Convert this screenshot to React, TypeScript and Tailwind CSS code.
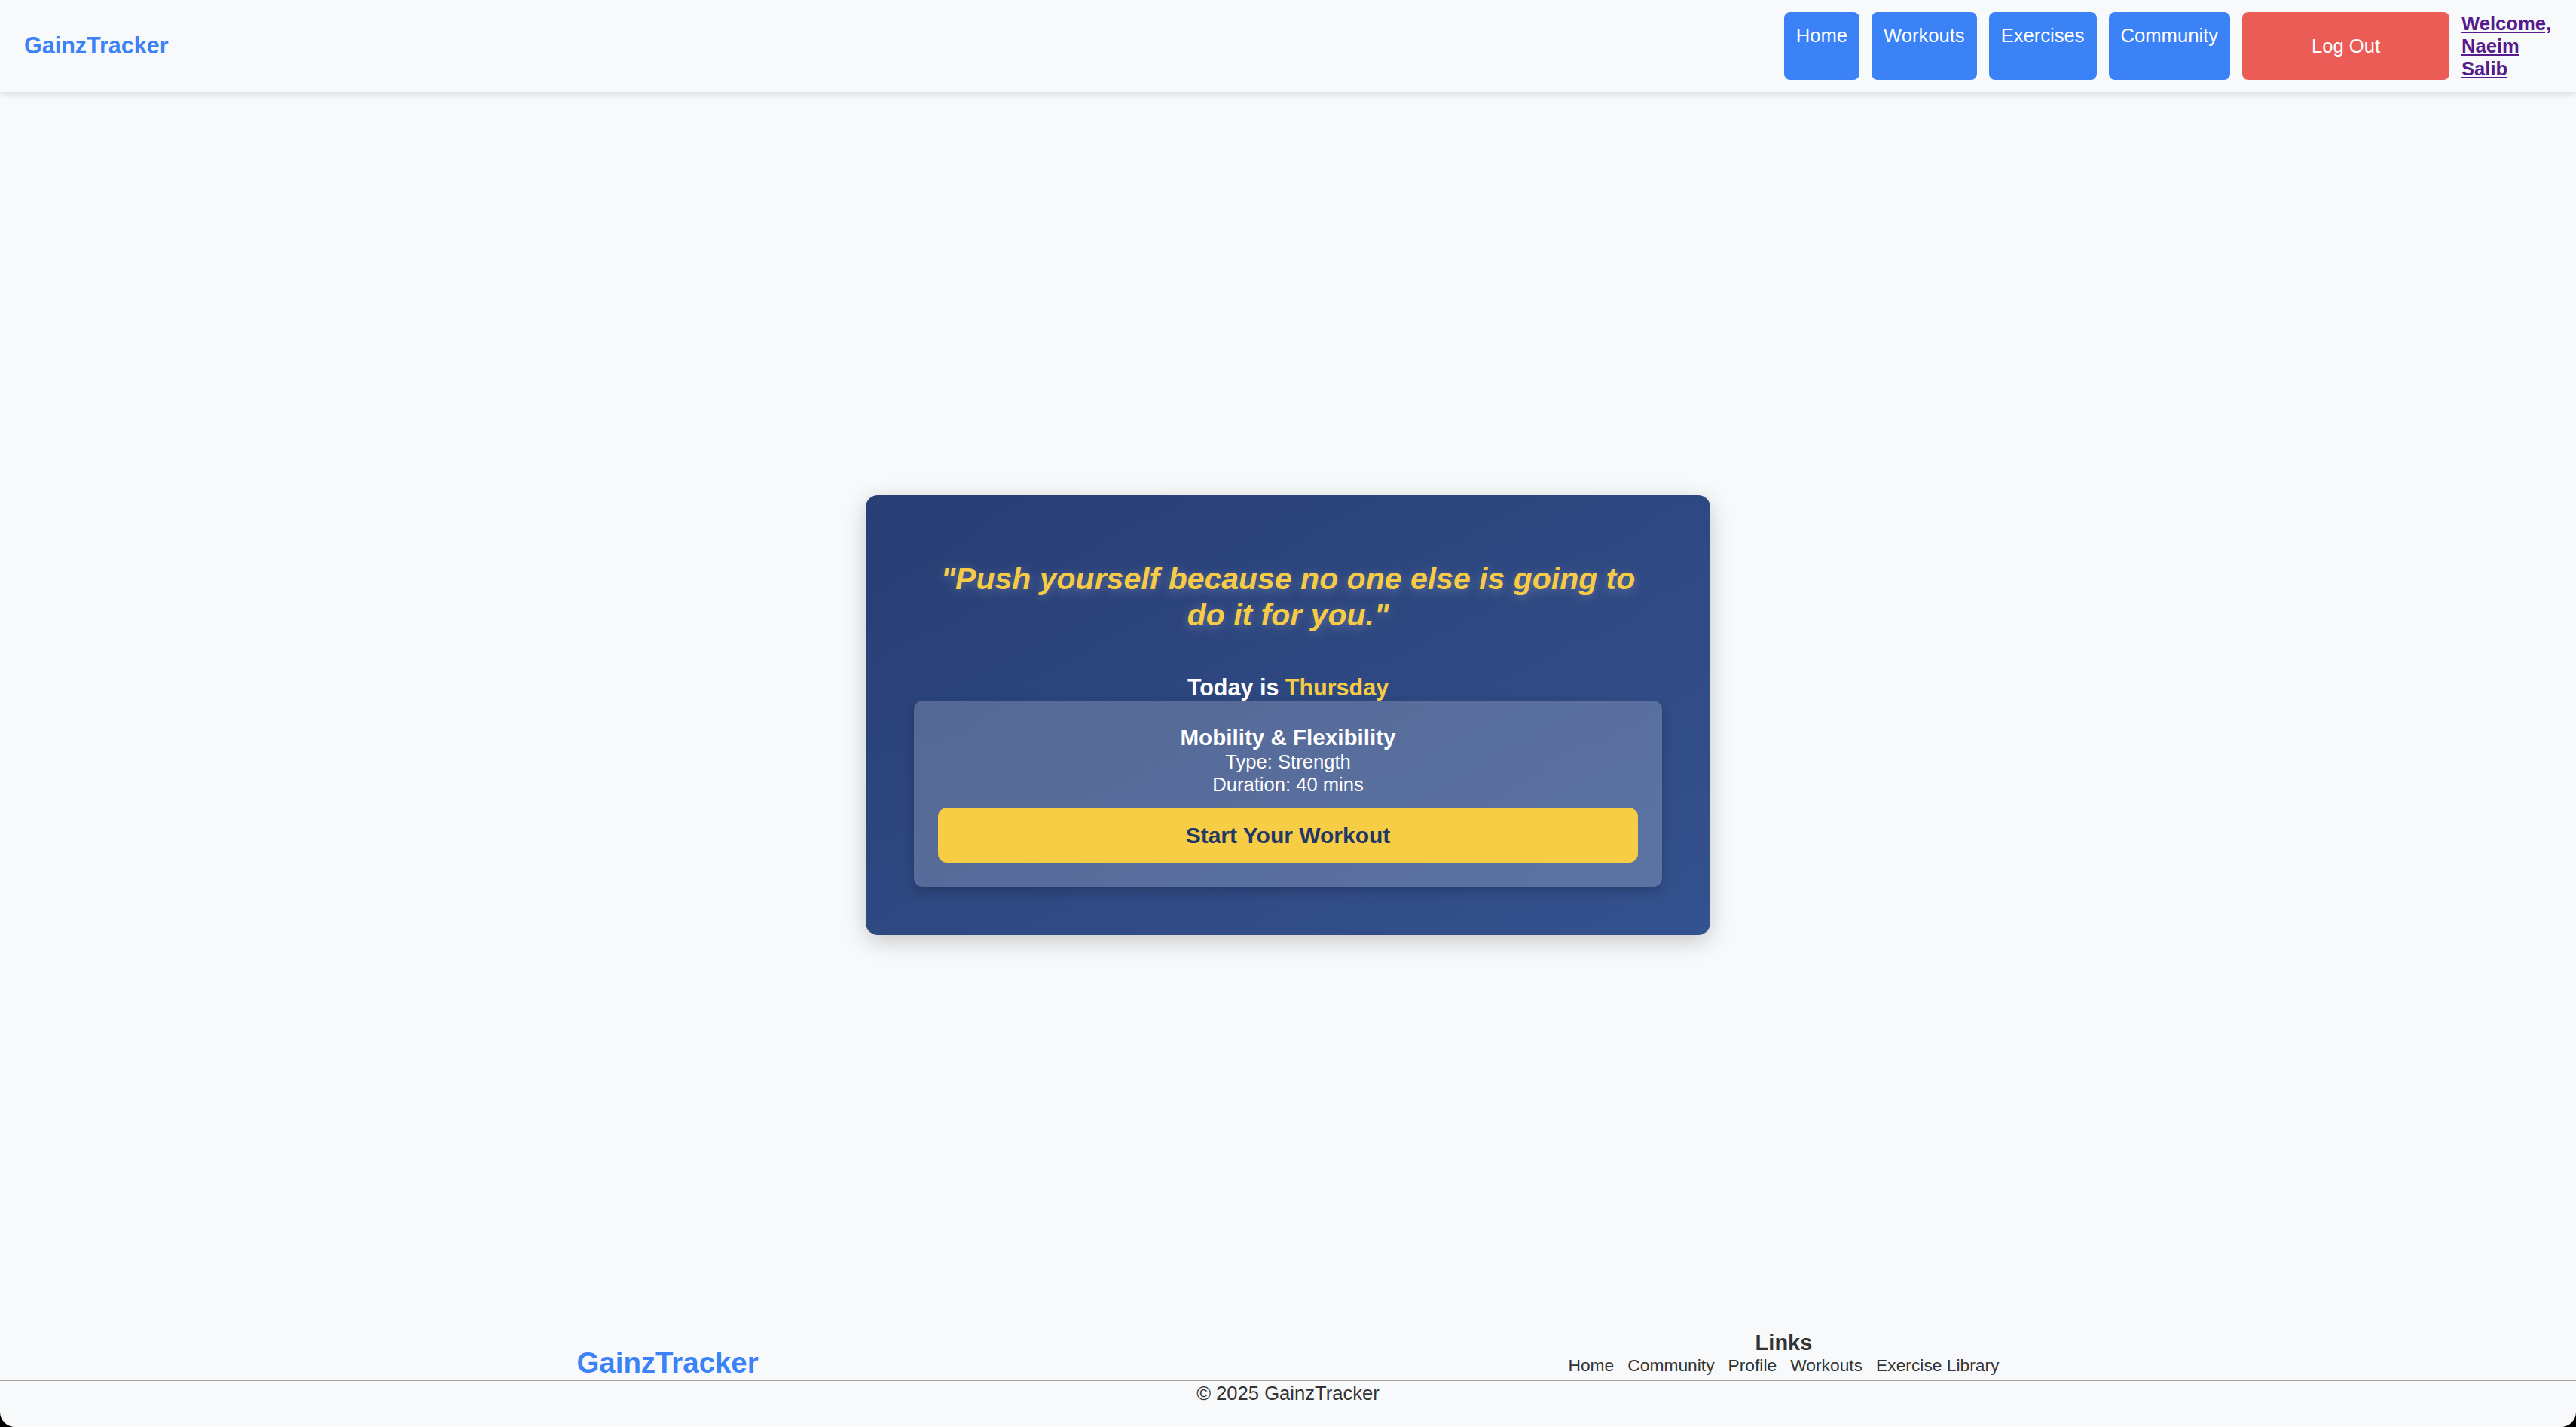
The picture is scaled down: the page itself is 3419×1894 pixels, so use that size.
export default function App() {
  const navLinks = ["Home", "Workouts", "Exercises", "Community"];
  const footerLinks = ["Home", "Community", "Profile", "Workouts", "Exercise Library"];
  return (
    <div className="min-h-screen bg-black font-['Liberation_Sans',Arial,sans-serif]">
      <div className="min-h-screen flex flex-col bg-[#f8f9fa] rounded-b-[20px] overflow-hidden">
        <header className="h-[122px] shrink-0 flex items-center justify-between px-[32px] bg-[#f8f9fa] shadow-[0_4px_8px_rgba(0,0,0,0.1)] relative z-10">
          <div className="text-[30.5px] font-bold text-[#3b82f6]">GainzTracker</div>
          <nav className="flex items-stretch gap-[16px]">
            {navLinks.map((l) => (
              <a
                key={l}
                href="#"
                className="bg-[#3b82f6] text-white text-[25.6px] leading-[29px] px-[16px] pt-[17px] rounded-[8px]"
              >
                {l}
              </a>
            ))}
            <button className="w-[275px] bg-[#ec5c57] text-white text-[25.6px] rounded-[8px] flex items-center justify-center">
              Log Out
            </button>
            <a
              href="#"
              className="w-[120px] text-[25.6px] font-bold leading-[30px] text-[#551a8b] underline"
            >
              Welcome, Naeim Salib
            </a>
          </nav>
        </header>

        <main className="flex-1 flex items-center justify-center pt-[10px]">
          <div className="w-[1121px] rounded-[16px] p-[64px] bg-linear-to-br from-[#283e74] to-[#34528f] shadow-[0_8px_30px_rgba(0,0,0,0.2)] text-center">
            <p className="mt-[23px] px-[16px] text-[41px] leading-[48px] font-bold italic text-[#f7cb45] [text-shadow:0_3px_14px_rgba(255,255,255,0.25)]">
              "Push yourself because no one else is going to do it for you."
            </p>
            <div className="mt-[54px] text-[30.5px] leading-[36px] font-bold text-white">
              Today is <span className="text-[#f7cb45]">Thursday</span>
            </div>
            <div className="rounded-[12px] bg-white/20 p-[32px] shadow-[0_6px_16px_rgba(0,0,0,0.2)]">
              <div className="text-[29.6px] leading-[34px] font-bold text-white">Mobility &amp; Flexibility</div>
              <div className="text-[25.6px] leading-[30px] text-white">Type: Strength</div>
              <div className="text-[25.6px] leading-[30px] text-white">Duration: 40 mins</div>
              <button className="mt-[16px] w-full h-[73px] rounded-[12px] bg-[#f7cd46] text-[#213766] text-[30px] font-bold">
                Start Your Workout
              </button>
            </div>
          </div>
        </main>

        <footer className="shrink-0">
          <div className="w-[1888px] mx-auto flex justify-between items-end">
            <div className="text-[38.4px] font-bold text-[#3b82f6] leading-[44px]">GainzTracker</div>
            <div className="flex flex-col items-center pb-[6px] text-[#333]">
              <div className="text-[29px] font-bold leading-[33px]">Links</div>
              <div className="flex gap-[18px] text-[22.8px] leading-[26px]">
                {footerLinks.map((l) => (
                  <a key={l} href="#">
                    {l}
                  </a>
                ))}
              </div>
            </div>
          </div>
          <div className="border-t-2 border-[#a0a0a0] text-center text-[25.6px] leading-[29px] text-[#333] pt-[2px] pb-[30px]">
            © 2025 GainzTracker
          </div>
        </footer>
      </div>
    </div>
  );
}
